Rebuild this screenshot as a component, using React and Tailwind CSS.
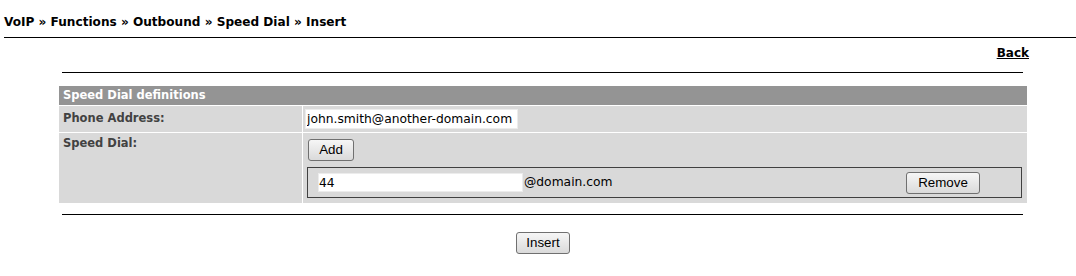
import React from "react";

const sans = "font-['DejaVu_Sans',Verdana,sans-serif]";
const btn =
  "h-[22px] rounded-[3px] border border-[#707070] bg-gradient-to-b from-[#f6f6f6] to-[#dadada] text-[13.33px] leading-none text-black font-['Liberation_Sans',Arial,sans-serif]";

export default function App() {
  return (
    <div className={`${sans} bg-white w-[1076px] h-[276px] overflow-hidden`}>
      <div className="ml-[4px] pt-[14px] pb-[7px] border-b border-black">
        <div className="text-[12.1px] leading-[16px] font-bold text-black">
          VoIP » Functions » Outbound » Speed Dial » Insert
        </div>
      </div>

      <div className="ml-[59px] w-[968px]">
        <div className="flex justify-end mt-[7px] -mr-[2px]">
          <a href="#" className="text-[12px] leading-[16px] font-bold text-black underline">
            Back
          </a>
        </div>
        <div className="mt-[11px] ml-[3px] mr-[4px] border-t border-black" />

        <div className="mt-[13px] grid grid-cols-[243px_724px] gap-px">
          <div className="col-span-2 h-[19px] bg-[#949494] px-[4px] flex items-center text-[11.5px] font-bold text-white">
            Speed Dial definitions
          </div>

          <div className="h-[26px] bg-[#d9d9d9] px-[4px] flex items-center text-[11.5px] font-bold text-[#424242]">
            Phone Address:
          </div>
          <div className="h-[26px] bg-[#d9d9d9] pl-[2px] pt-[3px]">
            <input
              readOnly
              value="john.smith@another-domain.com"
              className="block w-[213px] h-[20px] bg-white border border-[#ececec] px-px text-[12.3px] text-black outline-none"
            />
          </div>

          <div className="h-[70px] bg-[#d9d9d9] px-[4px] pt-[2px] text-[11.5px] leading-[16px] font-bold text-[#424242]">
            Speed Dial:
          </div>
          <div className="h-[70px] bg-[#d9d9d9] pt-[6px] pl-[4px] pr-[5px]">
            <button className={`${btn} w-[46px] ml-px block`}>Add</button>
            <div className="mt-[6px] h-[31px] border border-[#404040] flex items-center pl-[10px] pr-[40px]">
              <input
                readOnly
                value="44"
                className="block w-[205px] h-[19px] bg-white border border-[#ececec] px-0 text-[12.3px] text-black outline-none"
              />
              <span className="ml-px text-[12.3px] text-black">@domain.com</span>
              <div className="flex-1" />
              <button className={`${btn} w-[74px] mr-px`}>Remove</button>
            </div>
          </div>
        </div>

        <div className="mt-[11px] ml-[3px] mr-[4px] border-t border-black" />

        <div className="mt-[17px] flex justify-center">
          <button className={`${btn} w-[54px]`}>Insert</button>
        </div>
      </div>
    </div>
  );
}
